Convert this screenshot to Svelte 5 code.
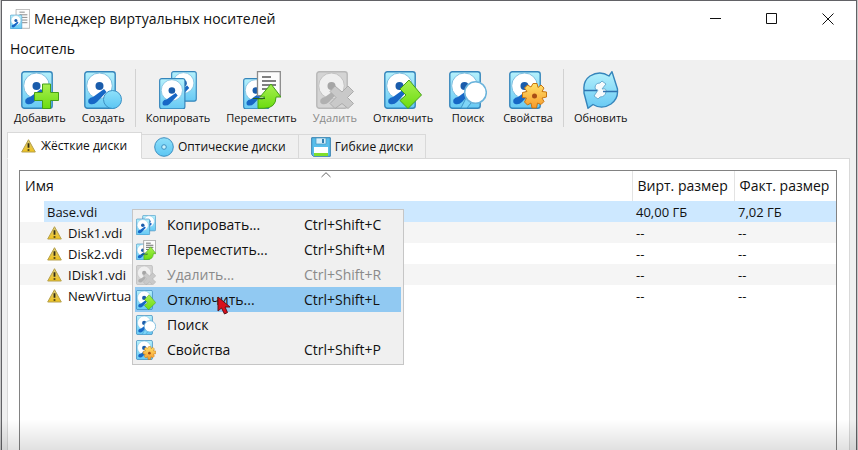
<script>
  const tools = [
    { icon: 'add', label: 'Добавить' },
    { icon: 'create', label: 'Создать' },
    { icon: 'copy', label: 'Копировать', divided: true },
    { icon: 'move', label: 'Переместить' },
    { icon: 'remove', label: 'Удалить', disabled: true },
    { icon: 'release', label: 'Отключить' },
    { icon: 'search', label: 'Поиск' },
    { icon: 'settings', label: 'Свойства' },
    { icon: 'refresh', label: 'Обновить', divided: true }
  ];

  const actions = [
    { icon: 'copy', label: 'Копировать...', keys: 'Ctrl+Shift+C' },
    { icon: 'move', label: 'Переместить...', keys: 'Ctrl+Shift+M' },
    { icon: 'remove', label: 'Удалить...', keys: 'Ctrl+Shift+R', disabled: true },
    { icon: 'release', label: 'Отключить...', keys: 'Ctrl+Shift+L', active: true },
    { icon: 'search', label: 'Поиск', keys: '' },
    { icon: 'settings', label: 'Свойства', keys: 'Ctrl+Shift+P' }
  ];

  const tabs = [
    { id: 'hdd', icon: 'warning', label: 'Жёсткие диски' },
    { id: 'cd', icon: 'disc', label: 'Оптические диски' },
    { id: 'fd', icon: 'floppy', label: 'Гибкие диски' }
  ];

  const media = [
    { name: 'Base.vdi', virtual: '40,00 ГБ', actual: '7,02 ГБ' },
    { name: 'Disk1.vdi', virtual: '--', actual: '--', warn: true },
    { name: 'Disk2.vdi', virtual: '--', actual: '--', warn: true },
    { name: 'IDisk1.vdi', virtual: '--', actual: '--', warn: true },
    { name: 'NewVirtua', virtual: '--', actual: '--', warn: true }
  ];

  let tab = $state('hdd');
  let selected = $state(0);
</script>

{#snippet drive(gray)}
  <rect x=".8" y=".8" width="30.400" height="36.400" rx="2.500" fill={gray ? '#d4d4d4' : 'url(#body)'} stroke={gray ? '#b8b8b8' : '#3585bb'} stroke-width="1.400" />
  <circle cx="15.500" cy="14.800" r="12.800" fill={gray ? '#efefef' : '#fff'} stroke={gray ? '#c2c2c2' : '#7fbfe0'} />
  <circle cx="15.500" cy="15" r="4" fill={gray ? '#a5a5a5' : '#1a5cab'} />
  <path d="M20 18 22.500 21 13 31Q10 34 6 33 3.500 32 4.500 28.500 6 26 9 26Z" fill={gray ? '#b0b0b0' : '#1767c6'} />
{/snippet}

{#snippet icon(name)}
  <svg class="icon" viewBox="0 0 38 38" aria-hidden="true">
    {#if name === 'copy'}
      <g transform="translate(12 0) scale(.81)">{@render drive(false)}</g>
      <g transform="translate(0 7) scale(.83)">{@render drive(false)}</g>
    {:else if name === 'move'}
      <g transform="translate(0 7) scale(.83)">{@render drive(false)}</g>
      <path d="M14.500.700h22.800v24H14.500z" fill="#fcfcfc" stroke="#8a8a8a" stroke-width="1.300" />
      <path d="M19 6h9M19 10h14M19 14h14M19 18h10" stroke="#555" stroke-width="1.600" />
      <path d="M28 13 38 26h-5q0 11-12 11.300h-6V28q5 1 7-2h-5z" fill="url(#green)" stroke="#459f18" />
      <path d="M10 27.500h12" stroke="#28631b" />
    {:else if name === 'manager'}
      <path d="M11.500.700h25.800v36H11.500z" fill="#fcfcfc" stroke="#999" stroke-width="1.300" />
      <path d="M18 6h10M18 11h15M23 16h10M23 21h10M23 26h10" stroke="#777" stroke-width="1.600" />
      <g transform="translate(0 11) scale(.72)">{@render drive(false)}</g>
    {:else if name === 'refresh'}
      <path d="M2 19Q1 10 8 5 18-1 27 5L30 .700 35.500 18v2Q36 28 29 33q-9 6-18 .5L6 37.300 2 22z" fill="url(#body)" stroke="#3585bb" stroke-width="1.400" stroke-linejoin="round" />
      <path d="M13 17q0-5 5-5l2-2 4 3-4 5q5-1 4 3-1 5-6 5l-2 2-4-3 4-6q-2 1-3-2z" fill="#f7fbfd" stroke="#6aadd0" />
      <path d="M2 19.500h13M21 20.500h14.500" stroke="#2f73b0" stroke-width="1.600" />
    {:else}
      {@render drive(name === 'remove')}
      {#if name === 'add'}
        <path d="M21.500 13h8v8.500h8v8h-8v8h-8v-8h-8v-8h8z" fill="url(#green)" stroke="#459f18" />
      {:else if name === 'create'}
        <circle cx="28.500" cy="28.500" r="9" fill="url(#blue)" stroke="#3d91c4" />
      {:else if name === 'remove'}
        <path d="m19 15 7 6 6-6 5.500 5.500-6 6 6 6L32 37.500l-6-5-7 5-5-5 6-6-6-6z" fill="#c9c9c9" stroke="#acacac" />
      {:else if name === 'release'}
        <path d="m25 9 12.500 15L24 37.500l-8-8 6-5.500-6-6z" fill="url(#green)" stroke="#459f18" />
      {:else if name === 'search'}
        <path d="m17 27 5 5-4 5h-6z" fill="#7fd5f7" stroke="#4098c9" />
        <circle cx="26.500" cy="21.500" r="10.800" fill="#fff" stroke="#6bb4dc" stroke-width="1.500" />
      {:else if name === 'settings'}
        <path d="M24 12.500h4l1 4 3-2.500 3 3-2 3.500 4.500.500v5l-4.500 1 2 3.500-3 3-3.500-1.500-1 5h-4.500l-1-5-3.500 2-3-3 2-4-4-.500v-5l4.500-1-2.500-3.500 3-3 3.500 2z" fill="url(#gold)" stroke="#c87512" stroke-linejoin="round" />
        <circle cx="25.500" cy="25" r="2.500" fill="#a84d14" />
      {/if}
    {/if}
  </svg>
{/snippet}

{#snippet warning()}
  <svg class="warn" viewBox="0 0 15 14" aria-hidden="true">
    <path d="M7.500.700 14.300 13H.700z" fill="url(#amber)" stroke="#b5a04c" stroke-linejoin="round" />
    <path d="M7.500 4.200v4.600M7.500 10.200v1.600" stroke="#302c16" stroke-width="1.800" />
  </svg>
{/snippet}

<svg class="defs" aria-hidden="true">
  <defs>
    <linearGradient id="body" x2="0" y2="1"><stop stop-color="#b5f1fc" /><stop offset="1" stop-color="#67c9f4" /></linearGradient>
    <linearGradient id="blue" x2="0" y2="1"><stop stop-color="#8fe0fa" /><stop offset="1" stop-color="#5cc6f3" /></linearGradient>
    <linearGradient id="green" x2="0" y2="1"><stop stop-color="#a8f050" /><stop offset="1" stop-color="#6bdc10" /></linearGradient>
    <linearGradient id="gold" x2="0" y2="1"><stop stop-color="#ffe16a" /><stop offset="1" stop-color="#f79a2a" /></linearGradient>
    <linearGradient id="amber" x2="0" y2="1"><stop stop-color="#d8cb7d" /><stop offset="1" stop-color="#f1c21b" /></linearGradient>
  </defs>
</svg>

<div class="window">
  <header class="titlebar">
    <span class="app-icon">{@render icon('manager')}</span>
    <h1>Менеджер виртуальных носителей</h1>
    <div class="controls">
      <button aria-label="Свернуть"><svg viewBox="0 0 12 12"><path d="M0 5.500h11" /></svg></button>
      <button aria-label="Развернуть"><svg viewBox="0 0 12 12"><path d="M.500.500h10v10H.500z" /></svg></button>
      <button aria-label="Закрыть"><svg viewBox="0 0 12 12"><path d="m.500.500 11 11m0-11-11 11" /></svg></button>
    </div>
  </header>

  <nav class="menubar"><button>Носитель</button></nav>

  <div class="toolbar" role="toolbar">
    {#each tools as tool}
      {#if tool.divided}<span class="divider"></span>{/if}
      <button disabled={tool.disabled}>
        {@render icon(tool.icon)}
        <span>{tool.label}</span>
      </button>
    {/each}
  </div>

  <div class="tabs" role="tablist">
    {#each tabs as item}
      <button role="tab" aria-selected={tab === item.id} onclick={() => (tab = item.id)}>
        {#if item.icon === 'warning'}
          {@render warning()}
        {:else if item.icon === 'disc'}
          <svg class="tab-icon" viewBox="0 0 20 20" aria-hidden="true">
            <circle cx="10" cy="10" r="9.300" fill="url(#blue)" stroke="#3d8fc0" />
            <circle cx="10" cy="10" r="2.300" fill="#c9f3fd" stroke="#3d8fc0" />
          </svg>
        {:else}
          <svg class="tab-icon" viewBox="0 0 20 20" aria-hidden="true">
            <path d="M.700.700h18.600v18.600H2.500L.700 17.500z" fill="#58bdea" stroke="#317eb0" />
            <path d="M5 1h10v6H5z" fill="#d8effa" stroke="#4595bf" stroke-width=".7" />
            <path d="M11 2h2v4h-2z" fill="#317eb0" />
            <path d="M3 10h14v9H3z" fill="#fff" />
            <path d="M3 16h14v3H3z" fill="#80df2b" />
          </svg>
        {/if}
        {item.label}
      </button>
    {/each}
    <span class="rest"></span>
  </div>

  <main class="pane">
    <div class="list">
      <table>
        <colgroup><col /><col class="size" /><col class="size" /></colgroup>
        <thead>
          <tr>
            <th>Имя<svg class="sort" viewBox="0 0 10 6" aria-hidden="true"><path d="M.500 5 5 .700 9.500 5" /></svg></th>
            <th>Вирт. размер</th>
            <th>Факт. размер</th>
          </tr>
        </thead>
        <tbody>
          {#each media as item, i}
            <tr class:selected={selected === i} onclick={() => (selected = i)}>
              <td class="name"><div>{#if item.warn}{@render warning()}{/if}{item.name}</div></td>
              <td>{item.virtual}</td>
              <td>{item.actual}</td>
            </tr>
          {/each}
        </tbody>
      </table>
    </div>
  </main>

  <div class="context" role="menu">
    {#each actions as action}
      <button role="menuitem" class:active={action.active} disabled={action.disabled}>
        {@render icon(action.icon)}
        <span>{action.label}</span>
        <kbd>{action.keys}</kbd>
      </button>
    {/each}
  </div>

  <svg class="pointer" viewBox="0 0 14 19" aria-hidden="true">
    <path d="M1 1v14l3.500-3 3 6 3-1.500-2.500-5.500h5z" fill="#d80f1c" stroke="#5c1218" />
  </svg>
  <div class="shade"></div>
</div>

<style>
  :global(body) {
    margin: 0;
    background: #c9c9c9;
  }

  .window {
    position: relative;
    box-sizing: border-box;
    display: flex;
    flex-direction: column;
    min-height: 100vh;
    margin: 0 1px;
    border: 1px solid #626266;
    border-bottom: 0;
    background: #f0f0f0;
    color: #111;
    font: 14px/20px "Open Sans", "Noto Sans", sans-serif;
  }

  button {
    margin: 0;
    padding: 0;
    border: 0;
    background: none;
    color: inherit;
    font: inherit;
  }

  svg {
    display: block;
    flex: none;
  }

  .defs {
    position: absolute;
    width: 0;
    height: 0;
  }

  .titlebar {
    display: flex;
    align-items: center;
    height: 36px;
    padding-left: 8px;
    background: #fff;
  }

  .app-icon .icon {
    width: 20px;
    height: 20px;
  }

  h1 {
    flex: 1;
    margin: 0 0 0 4px;
    font-size: 14px;
    font-weight: 400;
  }

  .controls {
    display: flex;
  }

  .controls button {
    display: grid;
    place-items: center;
    width: 56px;
    height: 36px;
  }

  .controls svg {
    width: 12px;
    height: 12px;
    fill: none;
    stroke: #111;
  }

  .menubar {
    padding: 2px 8px 1px;
    background: #fff;
  }

  .toolbar {
    display: flex;
    padding: 11px 4px 5px;
    font-size: 11px;
    line-height: 18px;
  }

  .toolbar button {
    display: flex;
    flex-direction: column;
    align-items: center;
    padding: 0 8px;
  }

  .toolbar .icon {
    width: 38px;
    height: 38px;
  }

  button:disabled {
    color: #8a8a8a;
  }

  .divider {
    width: 1px;
    margin: -2px 2px 0;
    background: #d2d2d2;
  }

  .tabs {
    display: flex;
    align-items: flex-end;
    padding: 0 6px 0 5px;
    font-size: 12px;
  }

  .tabs button {
    display: flex;
    align-items: center;
    gap: 4px;
    box-sizing: border-box;
    height: 25px;
    padding: 0 12px;
    border: 1px solid #d9d9d9;
    border-left: 0;
  }

  .tabs button[aria-selected='true'] {
    gap: 5px;
    height: 27px;
    padding: 0 14px 0 13px;
    border-left: 1px solid #d9d9d9;
    border-bottom-color: #fff;
    background: #fff;
  }

  .tab-icon {
    width: 20px;
    height: 20px;
  }

  .warn {
    width: 15px;
    height: 14px;
  }

  .rest {
    flex: 1;
    border-bottom: 1px solid #d9d9d9;
  }

  .pane {
    flex: 1;
    display: flex;
    margin: 0 6px 0 5px;
    padding: 11px 12px 0 11px;
    border: 1px solid #d9d9d9;
    border-width: 0 1px;
    background: #fff;
  }

  .list {
    flex: 1;
    border: 1px solid #828282;
    border-bottom: 0;
  }

  table {
    width: 100%;
    table-layout: fixed;
    border-collapse: collapse;
    font-size: 13px;
  }

  .size {
    width: 102px;
  }

  th {
    position: relative;
    height: 30px;
    padding: 0 0 0 5px;
    font-size: 14px;
    font-weight: 400;
    text-align: left;
    white-space: nowrap;
  }

  th + th {
    border-left: 1px solid #e3e3e3;
  }

  .sort {
    position: absolute;
    top: 1px;
    left: 50%;
    width: 10px;
    height: 6px;
    margin-left: -5px;
    fill: none;
    stroke: #666;
  }

  td {
    height: 21px;
    padding: 0 0 0 4px;
    line-height: 20px;
  }

  td.name {
    padding-left: 24px;
  }

  td.name div {
    display: flex;
    align-items: center;
    gap: 6px;
    padding-left: 3px;
  }

  tbody tr:nth-child(even) {
    background: #f5f5f5;
  }

  tr.selected td,
  tr.selected td.name div {
    background: #cde8ff;
  }

  tr.selected td.name {
    background: #fff;
  }

  tr.selected td.name div {
    height: 21px;
  }

  .context {
    position: absolute;
    top: 208px;
    left: 130px;
    box-sizing: border-box;
    width: 272px;
    padding: 2px;
    border: 1px solid #c6c6c6;
    background: #f0f0f0;
  }

  .context button {
    display: grid;
    grid-template-columns: 20px 1fr 97px;
    align-items: center;
    width: 100%;
    height: 25px;
    padding-left: 1px;
    text-align: left;
  }

  .context .icon {
    width: 20px;
    height: 20px;
  }

  .context span {
    padding-left: 11px;
  }

  .context .active {
    background: #91c9f2;
  }

  kbd {
    font: inherit;
  }

  .pointer {
    position: absolute;
    top: 295px;
    left: 215px;
    width: 14px;
    height: 19px;
  }

  .shade {
    position: fixed;
    inset: auto 0 0;
    height: 30px;
    background: linear-gradient(transparent, rgba(0, 0, 0, 0.12));
    pointer-events: none;
  }
</style>
